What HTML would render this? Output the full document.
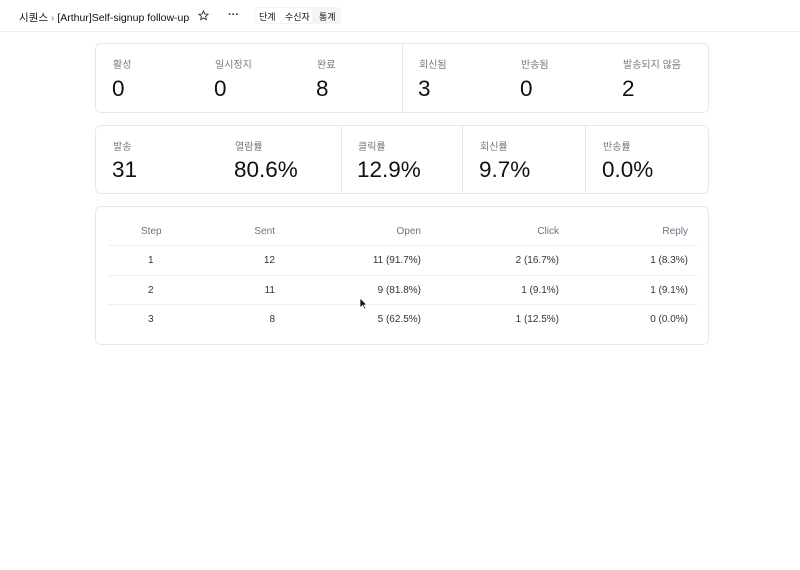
<!DOCTYPE html><html><head><meta charset="utf-8"><style>
*{margin:0;padding:0;box-sizing:border-box}
body{width:800px;height:570px;background:#fff;font-family:"Liberation Sans","Noto Sans CJK KR",sans-serif;color:#111;position:relative;overflow:hidden}
.a{position:absolute;white-space:nowrap}
.card{position:absolute;border:1px solid #e8e8ea;border-radius:6px}
.lab{font-size:10px;color:#777}
.num{font-size:22.5px;color:#111}
.vl{position:absolute;width:1px;background:#e8e8ea}
.t{font-size:10px;color:#333}
.h{font-size:10px;color:#6b7280}
.hl{position:absolute;left:108px;width:589px;height:1px;background:#eceef0}
</style></head><body>
<div class="a" style="left:19px;top:10px;font-size:10.5px">시퀀스 <span style="color:#888">›</span> [Arthur]Self-signup follow-up</div>
<svg class="a" style="left:198px;top:10px" width="11" height="11" viewBox="0 0 12 12"><path d="M6 1 L7.4 4.3 L11 4.6 L8.3 7 L9.1 10.6 L6 8.7 L2.9 10.6 L3.7 7 L1 4.6 L4.6 4.3 Z" fill="none" stroke="#333" stroke-width="1"/></svg>
<div class="a" style="left:228px;top:9px;font-size:11px;color:#333;font-weight:bold">···</div>
<div class="a" style="left:254px;top:7px;width:87px;height:17px;background:#f4f4f5;border-radius:4px"></div>
<div class="a" style="left:255px;top:8px;width:57px;height:15px;background:#fff;border-radius:3px"></div>
<div class="a" style="left:259px;top:10px;font-size:9px">단계</div>
<div class="a" style="left:285px;top:10px;font-size:9px">수신자</div>
<div class="a" style="left:319px;top:10px;font-size:9px">통계</div>
<div class="a" style="left:0;top:31px;width:800px;height:1px;background:#ededef"></div>

<div class="card" style="left:95px;top:43px;width:614px;height:70px"></div>
<div class="vl" style="left:402px;top:44px;height:68px"></div>
<div class="a lab" style="left:113px;top:56px">활성</div><div class="a num" style="left:112px;top:76px">0</div>
<div class="a lab" style="left:215px;top:56px">일시정지</div><div class="a num" style="left:214px;top:76px">0</div>
<div class="a lab" style="left:317px;top:56px">완료</div><div class="a num" style="left:316px;top:76px">8</div>
<div class="a lab" style="left:419px;top:56px">회신됨</div><div class="a num" style="left:418px;top:76px">3</div>
<div class="a lab" style="left:521px;top:56px">반송됨</div><div class="a num" style="left:520px;top:76px">0</div>
<div class="a lab" style="left:623px;top:56px">발송되지 않음</div><div class="a num" style="left:622px;top:76px">2</div>

<div class="card" style="left:95px;top:125px;width:614px;height:69px"></div>
<div class="vl" style="left:341px;top:126px;height:67px"></div>
<div class="vl" style="left:462px;top:126px;height:67px"></div>
<div class="vl" style="left:585px;top:126px;height:67px"></div>
<div class="a lab" style="left:113px;top:138px">발송</div><div class="a num" style="left:112px;top:157px">31</div>
<div class="a lab" style="left:235px;top:138px">열람률</div><div class="a num" style="left:234px;top:157px">80.6%</div>
<div class="a lab" style="left:358px;top:138px">클릭률</div><div class="a num" style="left:357px;top:157px">12.9%</div>
<div class="a lab" style="left:480px;top:138px">회신률</div><div class="a num" style="left:479px;top:157px">9.7%</div>
<div class="a lab" style="left:603px;top:138px">반송률</div><div class="a num" style="left:602px;top:157px">0.0%</div>

<div class="card" style="left:95px;top:206px;width:614px;height:139px"></div>
<div class="hl" style="top:245px"></div><div class="hl" style="top:275px"></div><div class="hl" style="top:304px"></div>
<div class="a h" style="left:141px;top:226px">Step</div>
<div class="a h" style="right:525px;top:226px">Sent</div>
<div class="a h" style="right:379px;top:226px">Open</div>
<div class="a h" style="right:241px;top:226px">Click</div>
<div class="a h" style="right:112px;top:226px">Reply</div>

<div class="a t" style="left:148px;top:255px">1</div><div class="a t" style="right:525px;top:255px">12</div><div class="a t" style="right:379px;top:255px">11 (91.7%)</div><div class="a t" style="right:241px;top:255px">2 (16.7%)</div><div class="a t" style="right:112px;top:255px">1 (8.3%)</div>
<div class="a t" style="left:148px;top:285px">2</div><div class="a t" style="right:525px;top:285px">11</div><div class="a t" style="right:379px;top:285px">9 (81.8%)</div><div class="a t" style="right:241px;top:285px">1 (9.1%)</div><div class="a t" style="right:112px;top:285px">1 (9.1%)</div>
<div class="a t" style="left:148px;top:314px">3</div><div class="a t" style="right:525px;top:314px">8</div><div class="a t" style="right:379px;top:314px">5 (62.5%)</div><div class="a t" style="right:241px;top:314px">1 (12.5%)</div><div class="a t" style="right:112px;top:314px">0 (0.0%)</div>

<svg class="a" style="left:359px;top:297px" width="9" height="13" viewBox="0 0 9 13"><path d="M1 1 L1 11 L3.5 8.5 L5.5 12 L7 11.3 L5 8 L8 8 Z" fill="#111" stroke="#fff" stroke-width="0.8"/></svg>
</body></html>
